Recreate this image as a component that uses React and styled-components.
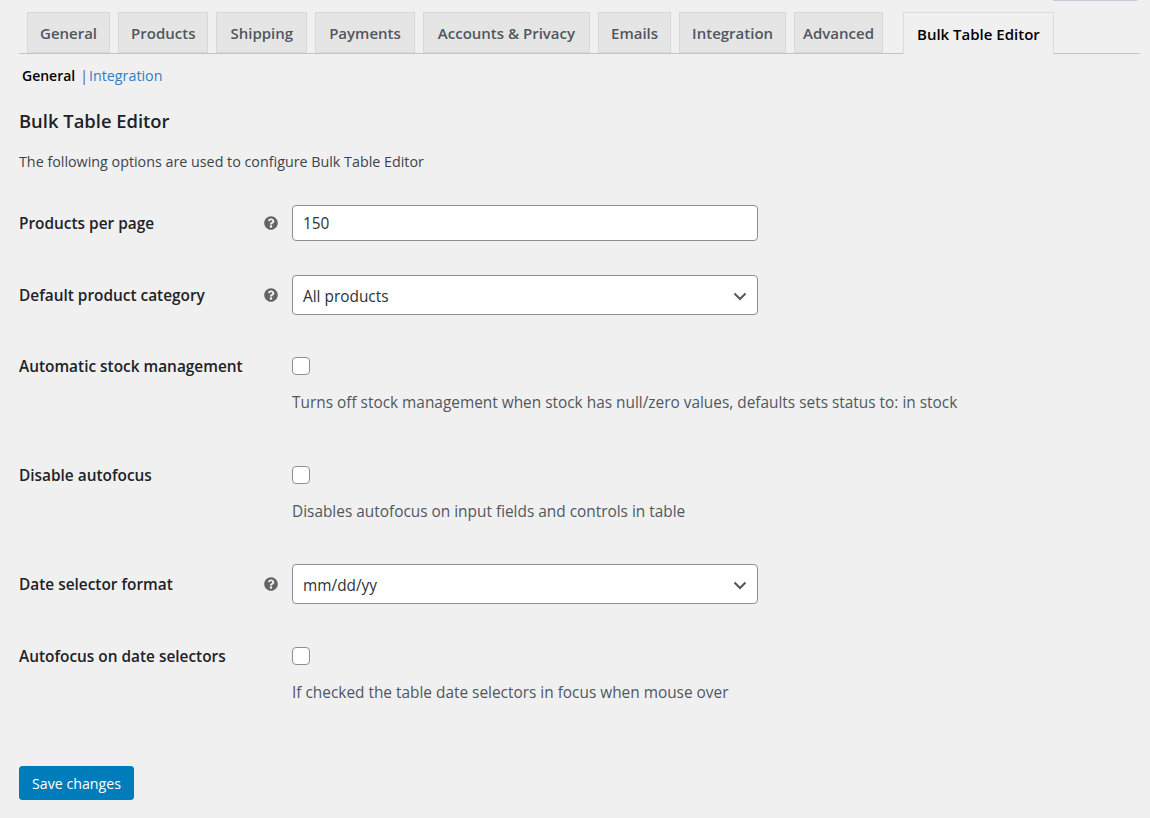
import React from "react";
import styled, { createGlobalStyle } from "styled-components";
import { FaQuestionCircle } from "react-icons/fa";

const GlobalStyle = createGlobalStyle`
  body {
    margin: 0;
    background-color: #f0f0f1;
    font-family: "Open Sans", "Noto Sans", sans-serif;
    color: #1d2327;
  }
`;

const Page = styled.div`
  padding: 0 10px 20px 19px;
  min-height: 818px;
  box-sizing: border-box;
`;

const ScreenMeta = styled.div`
  height: 12px;
  display: flex;
  justify-content: flex-end;
  padding-right: 3px;
`;

const MetaEdge = styled.div`
  width: 84px;
  height: 1px;
  background-color: #c5ccd6;
`;

const TabBar = styled.nav`
  display: flex;
  align-items: flex-end;
  border-bottom: 1px solid #c3c4c7;
  padding-left: 8px;
  height: 41px;
`;

const Tab = styled.a`
  display: flex;
  align-items: center;
  box-sizing: border-box;
  height: ${(p) => (p.$active ? "42px" : "41px")};
  margin-bottom: ${(p) => (p.$active ? "-1px" : "0")};
  margin-left: ${(p) => (p.$first ? "0" : p.$active ? "20px" : "8px")};
  padding: 0 ${(p) => p.$pad || 12}px;
  border: 1px solid #c3c4c7;
  border-bottom: ${(p) => (p.$active ? "none" : "1px solid #c3c4c7")};
  border-color: ${(p) => (p.$active ? "#dcdcde" : "#d8d8d8")};
  background-color: ${(p) => (p.$active ? "#f0f0f1" : "#e5e5e5")};
  color: ${(p) => (p.$active ? "#000" : "#50575e")};
  font-size: 15px;
  font-weight: 600;
  white-space: nowrap;
  text-decoration: none;
`;

const SubNav = styled.ul`
  display: flex;
  align-items: center;
  list-style: none;
  margin: 0;
  padding: 11px 0 0 3px;
  height: 22px;
  font-size: 14px;
  line-height: 22px;
`;

const SubItem = styled.li`
  color: ${(p) => (p.$current ? "#000" : "#2e7fc0")};
  font-weight: ${(p) => (p.$current ? 600 : 400)};
  font-size: ${(p) => (p.$current ? "14px" : "14.3px")};
`;

const Separator = styled.span`
  color: #50575e;
  margin: 0 1px 0 5px;
`;

const Title = styled.h2`
  margin: 20px 0 0;
  font-size: 18.4px;
  line-height: 28px;
  font-weight: 600;
  color: #1d2327;
`;

const Intro = styled.p`
  margin: 16px 0 0;
  font-size: 14.3px;
  line-height: 22px;
  color: #3c434a;
`;

const Row = styled.div`
  display: grid;
  grid-template-columns: 244px 29px 466px;
  align-items: start;
  margin-top: ${(p) => p.$space}px;
`;

const LabelCell = styled.div`
  display: flex;
  align-items: center;
  height: ${(p) => p.$h}px;
  font-size: 15.4px;
  font-weight: 600;
  color: #1d2327;
  white-space: nowrap;
`;

const HelpCell = styled.div`
  display: flex;
  align-items: center;
  height: ${(p) => p.$h}px;
  padding-left: 1px;
  color: #646464;
  font-size: 14px;
`;

const FieldCell = styled.div`
  display: flex;
  flex-direction: column;
`;

const TextInput = styled.input`
  box-sizing: border-box;
  width: 466px;
  height: 36px;
  padding: 0 10px;
  border: 1px solid #8c8f94;
  border-radius: 4px;
  background: #fff;
  font-family: inherit;
  font-size: 15.4px;
  color: #2c3338;
  outline: none;
`;

const SelectBox = styled.div`
  box-sizing: border-box;
  width: 466px;
  height: 40px;
  display: flex;
  align-items: center;
  justify-content: space-between;
  padding: 2px 10px 0 10px;
  border: 1px solid #8c8f94;
  border-radius: 4px;
  background: #fff;
  font-size: 15.4px;
  color: #2c3338;
`;

const Chevron = () => (
  <svg width="14" height="9" viewBox="0 0 14 9">
    <path d="M1.5 1.5 L7 7 L12.5 1.5" fill="none" stroke="#50575e" strokeWidth="2" />
  </svg>
);

const Checkbox = styled.span`
  display: block;
  box-sizing: border-box;
  width: 18px;
  height: 18px;
  border: 1px solid #8c8f94;
  border-radius: 4px;
  background: #fff;
`;

const Description = styled.p`
  margin: 17px 0 0;
  font-size: 15.4px;
  line-height: 22px;
  color: #50575e;
  white-space: nowrap;
`;

const SaveButton = styled.button`
  display: block;
  margin-top: 62px;
  height: 34px;
  padding: 0 12px;
  border: 1px solid #007cba;
  border-radius: 3px;
  background-color: #007cba;
  color: #fff;
  font-family: inherit;
  font-size: 14.2px;
`;

const tabs = [
  { name: "General", pad: 12 },
  { name: "Products", pad: 12 },
  { name: "Shipping", pad: 13 },
  { name: "Payments", pad: 13 },
  { name: "Accounts & Privacy", pad: 14 },
  { name: "Emails", pad: 12 },
  { name: "Integration", pad: 12 },
  { name: "Advanced", pad: 8 },
  { name: "Bulk Table Editor", pad: 13 },
];

const settings = [
  { label: "Products per page", type: "text", value: "150", help: true, space: 32 },
  { label: "Default product category", type: "select", value: "All products", help: true, space: 34 },
  {
    label: "Automatic stock management",
    type: "checkbox",
    help: false,
    space: 42,
    desc: "Turns off stock management when stock has null/zero values, defaults sets status to: in stock",
  },
  {
    label: "Disable autofocus",
    type: "checkbox",
    help: false,
    space: 52,
    desc: "Disables autofocus on input fields and controls in table",
  },
  { label: "Date selector format", type: "select", value: "mm/dd/yy", help: true, space: 41 },
  {
    label: "Autofocus on date selectors",
    type: "checkbox",
    help: false,
    space: 43,
    desc: "If checked the table date selectors in focus when mouse over",
  },
];

const fieldHeight = { text: 36, select: 40, checkbox: 18 };

const Field = ({ item }) => {
  if (item.type === "text") return <TextInput defaultValue={item.value} />;
  if (item.type === "select")
    return (
      <SelectBox>
        <span>{item.value}</span>
        <Chevron />
      </SelectBox>
    );
  return (
    <>
      <Checkbox />
      {item.desc && <Description>{item.desc}</Description>}
    </>
  );
};

const App = () => {
  return (
    <Page>
      <GlobalStyle />
      <ScreenMeta>
        <MetaEdge />
      </ScreenMeta>
      <TabBar>
        {tabs.map((t, i) => (
          <Tab
            key={t.name}
            $first={i === 0}
            $pad={t.pad}
            $active={t.name === "Bulk Table Editor"}
          >
            {t.name}
          </Tab>
        ))}
      </TabBar>
      <SubNav>
        <SubItem $current>General</SubItem>
        <Separator>|</Separator>
        <SubItem>Integration</SubItem>
      </SubNav>
      <Title>Bulk Table Editor</Title>
      <Intro>The following options are used to configure Bulk Table Editor</Intro>
      {settings.map((item) => {
        const h = fieldHeight[item.type];
        return (
          <Row key={item.label} $space={item.space}>
            <LabelCell $h={h}>{item.label}</LabelCell>
            <HelpCell $h={h}>{item.help && <FaQuestionCircle />}</HelpCell>
            <FieldCell>
              <Field item={item} />
            </FieldCell>
          </Row>
        );
      })}
      <SaveButton>Save changes</SaveButton>
    </Page>
  );
};

export default App;
